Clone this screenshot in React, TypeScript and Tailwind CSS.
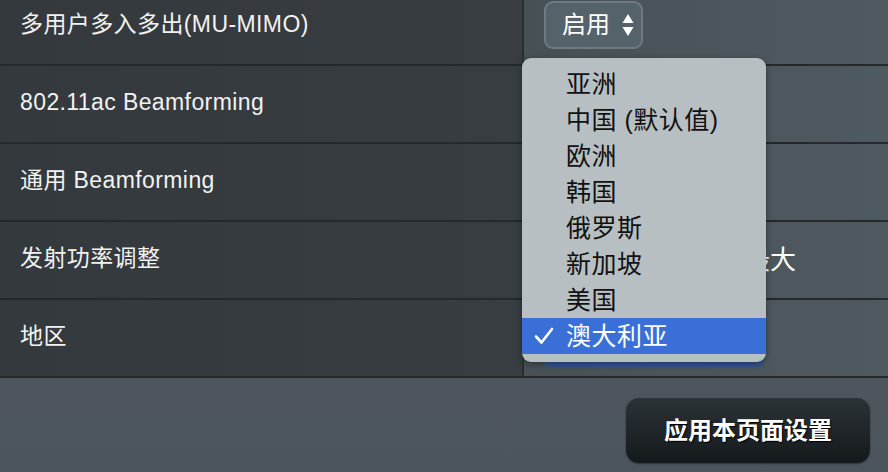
import { useState } from "react"

const font = "font-['Helvetica_Neue','Liberation_Sans','Noto_Sans_CJK_SC',sans-serif]"

const rows = [
  { label: "多用户多入多出(MU-MIMO)", value: "select" },
  { label: "802.11ac Beamforming", value: "" },
  { label: "通用 Beamforming", value: "" },
  { label: "发射功率调整", value: "power" },
  { label: "地区", value: "" },
]

const regions = ["亚洲", "中国 (默认值)", "欧洲", "韩国", "俄罗斯", "新加坡", "美国", "澳大利亚"]

function Arrows() {
  return (
    <svg width="12" height="24" viewBox="0 0 12 24" className="ml-[12px]">
      <path d="M6 1 L11.5 10 H0.5 Z" fill="#ffffff" />
      <path d="M6 23 L11.5 14 H0.5 Z" fill="#ffffff" />
    </svg>
  )
}

function Check() {
  return (
    <svg width="20" height="18" viewBox="0 0 20 18" className="shrink-0">
      <path
        d="M2 9.5 L7.5 15.5 L18 2"
        fill="none"
        stroke="#ffffff"
        strokeWidth="2.6"
        strokeLinecap="round"
        strokeLinejoin="round"
      />
    </svg>
  )
}

export default function App() {
  const [selected] = useState("澳大利亚")

  return (
    <div className={`relative h-[472px] w-[888px] overflow-hidden bg-gradient-to-b from-[#545b62] to-[#4d555c] ${font}`}>
      <div className="-mt-[12px]">
        {rows.map((row) => (
          <div key={row.label} className="flex h-[78px] border-b-2 border-[#25292c]">
            <div className="flex w-[524px] shrink-0 items-center border-r-2 border-[#2a2f32] bg-gradient-to-r from-[#33393c] to-[#373d41] pb-[3px] pl-[20px] text-[23px] tracking-[0.4px] text-[#f2f2f2]">
              {row.label}
            </div>
            <div className="flex flex-1 items-center bg-gradient-to-r from-[#475055] to-[#4f5a60]">
              {row.value === "select" && (
                <div className="ml-[20px] mt-[-2px] flex h-[48px] w-[99px] items-center rounded-[9px] border-2 border-[#6f7a80] bg-[#56626a] pl-[16px] text-[24px] text-white">
                  启用
                  <Arrows />
                </div>
              )}
              {row.value === "power" && (
                <span className="ml-[220px] text-[26px] text-white">最大</span>
              )}
            </div>
          </div>
        ))}
      </div>

      <div className="flex justify-end pr-[18px] pt-[20px]">
        <button className="flex h-[65px] w-[244px] items-center justify-center rounded-[13px] bg-gradient-to-b from-[#2c3337] to-[#14191c] text-[24px] font-bold text-white shadow-[0_1px_2px_rgba(0,0,0,0.4)] [text-shadow:1px_1px_1px_#000]">
          应用本页面设置
        </button>
      </div>

      <div className="absolute left-[543px] top-[352px] h-[15px] w-[221px] rounded-b-[6px] bg-[#34548a]" />

      <div className="absolute left-[522px] top-[58px] w-[244px] rounded-[9px] bg-[#b7bfc3] pb-[8px] pt-[8px] shadow-[0_2px_6px_rgba(0,0,0,0.35)]">
        {regions.map((r) => {
          const active = r === selected
          return (
            <div
              key={r}
              className={`flex h-[36px] items-center text-[25px] leading-none tracking-[0.5px] ${
                active ? "bg-[#3a6fd7] text-white" : "text-[#111111]"
              }`}
            >
              <div className="flex w-[44px] justify-end pr-[12px]">{active && <Check />}</div>
              {r}
            </div>
          )
        })}
      </div>
    </div>
  )
}
